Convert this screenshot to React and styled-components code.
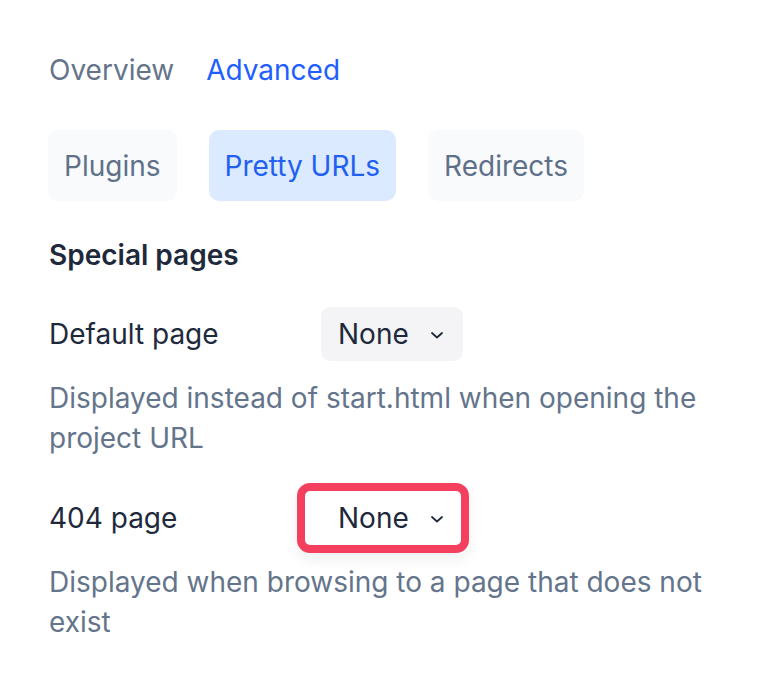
import React from 'react';
import styled, { createGlobalStyle } from 'styled-components';

const GlobalStyle = createGlobalStyle`
   body {
      margin: 0;
      background: #ffffff;
      font-family: Inter, "Noto Sans", sans-serif;
      -webkit-font-smoothing: antialiased;
   }
`;

const Page = styled.div`
   width: 766px;
   height: 686px;
   box-sizing: border-box;
   padding: 50px 48px 0 48px;
   font-size: 28px;
   line-height: 40px;
   color: #1e293b;
`;

const TopTabs = styled.div`
   display: flex;
   gap: 32px;
   padding-left: 1px;
`;

const TopTab = styled.span`
   color: ${p => (p.active ? '#1f5eff' : '#64748b')};
`;

const SubTabs = styled.div`
   display: flex;
   gap: 32px;
   margin-top: 40px;
`;

const SubTab = styled.div`
   height: 71px;
   display: flex;
   align-items: center;
   padding: 0 16px;
   border-radius: 10px;
   background: ${p => (p.active ? '#dbeafe' : '#f8fafc')};
   color: ${p => (p.active ? '#2160f3' : '#5f7089')};
`;

const SectionTitle = styled.h2`
   margin: 34px 0 0 1px;
   font-size: 28px;
   line-height: 40px;
   font-weight: 600;
   color: #1e293b;
`;

const Row = styled.div`
   display: flex;
   align-items: center;
   height: 54px;
   margin-top: ${p => p.top}px;
`;

const Label = styled.div`
   width: 272px;
   padding-left: 1px;
   color: #1e293b;
`;

const Select = styled.div`
   box-sizing: border-box;
   display: flex;
   align-items: center;
   gap: 22px;
   height: ${p => (p.highlighted ? 70 : 54)}px;
   padding: ${p => (p.highlighted ? '0 18px 0 33px' : '0 20px 0 17px')};
   margin-left: ${p => (p.highlighted ? -24 : 0)}px;
   border-radius: ${p => (p.highlighted ? 13 : 9)}px;
   background: ${p => (p.highlighted ? '#ffffff' : '#f4f4f6')};
   border: ${p => (p.highlighted ? '8px solid #f43f5e' : 'none')};
   box-shadow: ${p => (p.highlighted ? '0 6px 14px rgba(15, 23, 42, 0.07)' : 'none')};
   color: #1e293b;
`;

const Chevron = styled.svg`
   width: 12px;
   height: 7px;
   margin-top: 2px;
`;

const Description = styled.p`
   margin: 17px 0 0 1px;
   color: #64748b;
   font-size: 28px;
   line-height: 40px;
   max-width: 670px;
`;

const ChevronDown = () => (
   <Chevron viewBox="0 0 12 7" fill="none">
      <polyline points="1,1 6,5.5 11,1" stroke="#1e293b" strokeWidth="1.8" strokeLinecap="round" strokeLinejoin="round" />
   </Chevron>
);

const SelectField = ({ highlighted }) => (
   <Select highlighted={highlighted}>
      <span>None</span>
      <ChevronDown />
   </Select>
);

export default function App() {
   return (
      <>
         <GlobalStyle />
         <Page>
            <TopTabs>
               <TopTab>Overview</TopTab>
               <TopTab active>Advanced</TopTab>
            </TopTabs>
            <SubTabs>
               <SubTab>Plugins</SubTab>
               <SubTab active>Pretty URLs</SubTab>
               <SubTab>Redirects</SubTab>
            </SubTabs>
            <SectionTitle>Special pages</SectionTitle>
            <Row top={32}>
               <Label>Default page</Label>
               <SelectField />
            </Row>
            <Description>Displayed instead of start.html when opening the project URL</Description>
            <Row top={33}>
               <Label>404 page</Label>
               <SelectField highlighted />
            </Row>
            <Description>Displayed when browsing to a page that does not exist</Description>
         </Page>
      </>
   );
}
